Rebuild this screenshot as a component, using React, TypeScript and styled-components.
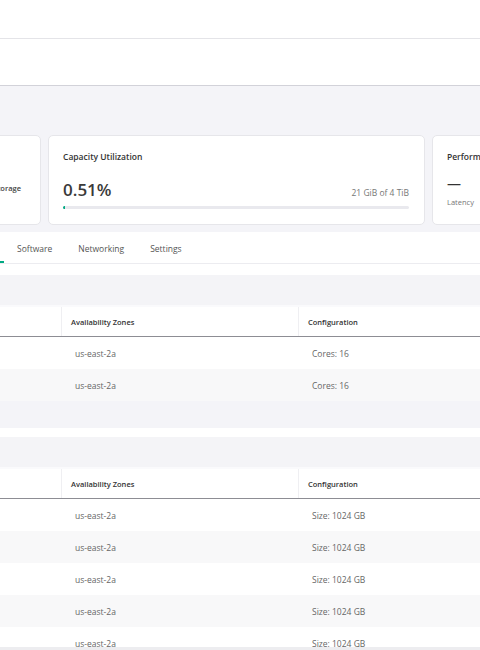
import styled, { createGlobalStyle } from "styled-components";

const GlobalStyle = createGlobalStyle`
  html, body {
    margin: 0;
    padding: 0;
    background: #f4f4f8;
    overflow: hidden;
  }
  body {
    font-family: "Open Sans", "Noto Sans", "Liberation Sans", sans-serif;
    color: #333;
  }
`;

const green = "#01a982";

type Row = { name: string; zone: string; config: string };

const computeRows: Row[] = [
  { name: "node-01", zone: "us-east-2a", config: "Cores: 16" },
  { name: "node-02", zone: "us-east-2a", config: "Cores: 16" },
];

const volumeRows: Row[] = [1, 2, 3, 4, 5].map((i) => ({
  name: `vol-0${i}`,
  zone: "us-east-2a",
  config: "Size: 1024 GB",
}));

const Page = styled.div`
  width: 1000px;
  margin-left: -160px;
`;

const TopBar = styled.header`
  height: 38px;
  background: #fff;
  border-bottom: 1px solid #e4e4e8;
`;

const SubBar = styled.div`
  height: 46px;
  background: #fff;
  border-bottom: 1px solid #d2d2d9;
`;

const Main = styled.main`
  padding-top: 49px;
  background: #f4f4f8;
`;

const KpiRow = styled.div`
  display: grid;
  grid-template-columns: 177px 377px 377px;
  gap: 7px;
  padding-left: 24px;
  height: 88px;
`;

const Card = styled.section`
  background: #fff;
  border: 1px solid #e6e6ea;
  border-radius: 5px;
  padding: 15px 15px 15px 14px;
  box-sizing: border-box;
  display: flex;
  flex-direction: column;
`;

const CardTitle = styled.h3`
  margin: 0;
  font-size: 8.5px;
  line-height: 12px;
  font-weight: 600;
  color: #333;
  white-space: nowrap;
`;

const TypeLine = styled.div`
  display: flex;
  justify-content: flex-end;
  margin-top: 20px;
  padding-right: 4px;
  font-size: 7.5px;
  font-weight: 600;
  color: #444;
  white-space: nowrap;
`;

const ValueLine = styled.div`
  display: flex;
  align-items: baseline;
  justify-content: space-between;
  margin-top: 17px;
`;

const BigValue = styled.span`
  font-size: 17px;
  line-height: 20px;
  font-weight: 600;
  color: #3a3a3a;
`;

const Subtle = styled.span<{ $size?: number }>`
  font-size: ${({ $size }) => $size ?? 8.5}px;
  color: #777;
  white-space: nowrap;
`;

const Track = styled.div`
  margin-top: 6px;
  height: 3px;
  background: #e9e9ee;
  border-radius: 2px;
  overflow: hidden;
`;

const Fill = styled.div`
  height: 100%;
  min-width: 2px;
  background: ${green};
`;

const Metrics = styled.div`
  display: flex;
  gap: 60px;
  margin-top: 13px;
`;

const Metric = styled.div`
  display: flex;
  flex-direction: column;
  gap: 5px;
`;

const Dash = styled.span`
  font-size: 14px;
  line-height: 16px;
  color: #333;
`;

const Panel = styled.div<{ $top: number }>`
  background: #fff;
  padding-top: ${({ $top }) => $top}px;
`;

const Content = styled.div`
  margin-top: 11px;
`;

const TabBar = styled.nav`
  display: flex;
  height: 31px;
  padding-left: 36px;
  border-bottom: 1px solid #ececf0;
`;

const Tab = styled.div<{ $active?: boolean }>`
  display: flex;
  align-items: center;
  padding: 4px 13px 0;
  font-size: 8.5px;
  color: #555;
  border-bottom: 2px solid ${({ $active }) => ($active ? green : "transparent")};
  white-space: nowrap;
`;

const SectionBar = styled.div`
  height: 30px;
  background: #f4f4f7;
  margin: 0 24px;
  border-bottom: 2px solid #fafafc;
`;

const Table = styled.div`
  margin: 0 24px;
`;

const Grid = styled.div`
  display: grid;
  grid-template-columns: 197px 237px 1fr;
`;

const HeadRow = styled(Grid)`
  height: 29px;
  border-bottom: 1px solid #8d8d94;
`;

const HeadCell = styled.div`
  display: flex;
  align-items: center;
  padding-left: 9px;
  font-size: 7.5px;
  font-weight: 600;
  color: #333;
  border-left: 1px solid #efeff2;
  &:first-child {
    border-left: none;
  }
`;

const BodyRow = styled(Grid)<{ $striped: boolean }>`
  height: 32px;
  background: ${({ $striped }) => ($striped ? "#f8f8f9" : "#fff")};
`;

const Cell = styled.div`
  display: flex;
  align-items: center;
  padding-left: 14px;
  font-size: 8.5px;
  color: #666;
  white-space: nowrap;
`;

const Gap = styled.div`
  height: 27px;
  background: #f4f4f8;
`;

const ScrollTrack = styled.div`
  position: fixed;
  left: 0;
  right: 0;
  bottom: 0;
  height: 3px;
  background: #ededf0;
`;

const DataTable = ({ rows }: { rows: Row[] }) => (
  <Table>
    <HeadRow>
      <HeadCell>Name</HeadCell>
      <HeadCell>Availability Zones</HeadCell>
      <HeadCell>Configuration</HeadCell>
    </HeadRow>
    {rows.map((r, i) => (
      <BodyRow key={r.name} $striped={i % 2 === 1}>
        <Cell>{r.name}</Cell>
        <Cell>{r.zone}</Cell>
        <Cell>{r.config}</Cell>
      </BodyRow>
    ))}
  </Table>
);

export default function App() {
  const used = 0.51;
  return (
    <>
      <GlobalStyle />
      <Page>
        <TopBar />
        <SubBar />
        <Main>
          <KpiRow>
            <Card>
              <CardTitle>Volume Type</CardTitle>
              <TypeLine>Block Storage</TypeLine>
            </Card>
            <Card>
              <CardTitle>Capacity Utilization</CardTitle>
              <ValueLine>
                <BigValue>{used.toFixed(2)}%</BigValue>
                <Subtle>21 GiB of 4 TiB</Subtle>
              </ValueLine>
              <Track>
                <Fill style={{ width: `${used}%` }} />
              </Track>
            </Card>
            <Card>
              <CardTitle>Performance</CardTitle>
              <Metrics>
                <Metric>
                  <Dash>—</Dash>
                  <Subtle $size={7.5}>Latency</Subtle>
                </Metric>
                <Metric>
                  <Dash>—</Dash>
                  <Subtle $size={7.5}>IOPS</Subtle>
                </Metric>
                <Metric>
                  <Dash>—</Dash>
                  <Subtle $size={7.5}>Throughput</Subtle>
                </Metric>
              </Metrics>
            </Card>
          </KpiRow>
          <Panel $top={0} style={{ marginTop: 9 }}>
            <TabBar>
              <Tab>Overview</Tab>
              <Tab $active>Hardware</Tab>
              <Tab>Software</Tab>
              <Tab>Networking</Tab>
              <Tab>Settings</Tab>
            </TabBar>
            <Content>
              <SectionBar />
              <DataTable rows={computeRows} />
            </Content>
          </Panel>
          <Gap />
          <Panel $top={9}>
            <SectionBar />
            <DataTable rows={volumeRows} />
          </Panel>
        </Main>
      </Page>
      <ScrollTrack />
    </>
  );
}
